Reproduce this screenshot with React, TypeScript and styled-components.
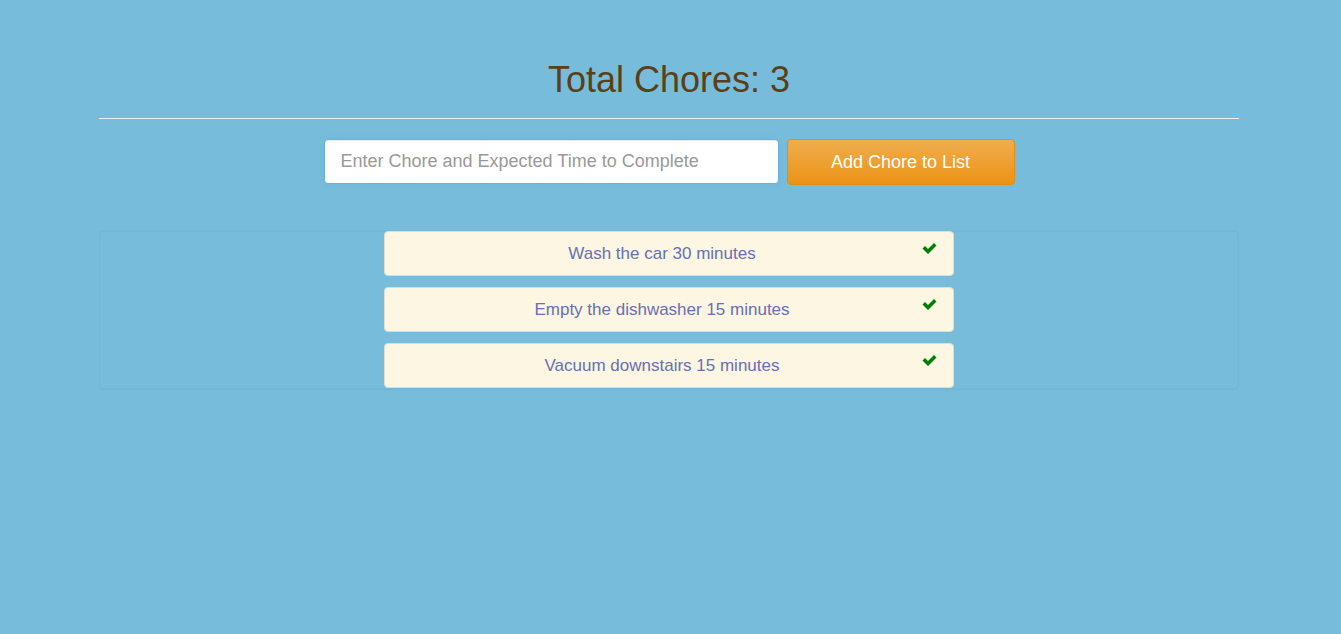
import React from "react";
import styled, { createGlobalStyle } from "styled-components";

const GlobalStyle = createGlobalStyle`
  html, body { margin: 0; padding: 0; }
  body {
    background: #78bcdb;
    font-family: "Liberation Sans", Arial, sans-serif;
    min-height: 634px;
    padding-right: 3px;
  }
  * { box-sizing: border-box; }
`;

const Container = styled.div`
  width: 1140px;
  margin: 0 auto;
  padding-top: 60px;
`;

const Title = styled.h1`
  margin: 0;
  text-align: center;
  font-size: 36px;
  font-weight: 400;
  line-height: 40px;
  color: #5a3f18;
`;

const Rule = styled.hr`
  margin: 18px 0 20px;
  border: 0;
  border-top: 1px solid #eeeeee;
`;

const Form = styled.form`
  display: flex;
  justify-content: center;
  gap: 8px;
  margin-bottom: 45px;
`;

const Input = styled.input`
  width: 455px;
  height: 45px;
  padding: 0 16px;
  border: 1px solid #66afe9;
  border-radius: 4px;
  background: #fff;
  font-family: "Liberation Sans", Arial, sans-serif;
  font-size: 18px;
  color: #555;
  outline: none;
  box-shadow: inset 0 1px 1px rgba(0,0,0,0.075), 0 0 4px rgba(102,175,233,0.6);
  &::placeholder { color: #999; }
`;

const Button = styled.button`
  width: 228px;
  height: 46px;
  border: 1px solid #e38d13;
  border-radius: 4px;
  background: linear-gradient(to bottom, #f0ad4e 0%, #eb9316 100%);
  color: #fff;
  font-family: "Liberation Sans", Arial, sans-serif;
  font-size: 18px;
  cursor: pointer;
`;

const Well = styled.div`
  display: flex;
  flex-direction: column;
  align-items: center;
  gap: 11px;
  border: 1px solid rgba(0,0,0,0.025);
  border-radius: 4px;
  box-shadow: inset 0 1px 1px rgba(0,0,0,0.04), 0 1px 1px rgba(0,0,0,0.04);
`;

const Item = styled.div`
  width: 570px;
  height: 45px;
  display: flex;
  align-items: center;
  padding: 0 16px 0 17px;
  background: #fdf6e3;
  border: 1px solid #e2dccb;
  border-radius: 4px;
  color: #6770b5;
  font-size: 17px;
`;

const Label = styled.span`
  flex: 1;
  text-align: center;
`;

const Check = styled.svg`
  width: 15px;
  height: 13px;
  margin-top: -10px;
`;

const chores = [
  "Wash the car 30 minutes",
  "Empty the dishwasher 15 minutes",
  "Vacuum downstairs 15 minutes",
];

export default function App() {
  return (
    <>
      <GlobalStyle />
      <Container>
        <Title>Total Chores: {chores.length}</Title>
        <Rule />
        <Form onSubmit={(e) => e.preventDefault()}>
          <Input placeholder="Enter Chore and Expected Time to Complete" />
          <Button type="submit">Add Chore to List</Button>
        </Form>
        <Well>
          {chores.map((c) => (
            <Item key={c}>
              <Label>{c}</Label>
              <Check viewBox="0 0 15 13">
                <path d="M0.5 6.5 L3 4 L6 7 L12 1 L14.5 3.5 L6 12 Z" fill="#008000" />
              </Check>
            </Item>
          ))}
        </Well>
      </Container>
    </>
  );
}
